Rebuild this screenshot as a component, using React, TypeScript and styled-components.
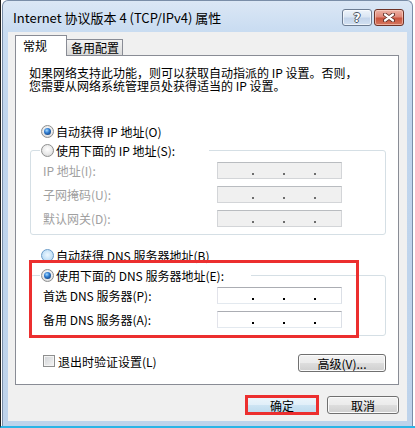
import React from 'react';
import styled, { createGlobalStyle, css } from 'styled-components';

const Global = createGlobalStyle`
  html, body { margin: 0; padding: 0; background: #ffffff; }
  body {
    width: 415px; height: 428px; overflow: hidden;
    font-family: "Noto Sans CJK SC", "Noto Sans", sans-serif;
    font-size: 12px; color: #000;
  }
  * { box-sizing: border-box; }
`;

const Desktop = styled.div`
  width: 415px;
  height: 428px;
  display: flex;
  align-items: flex-start;
  padding-left: 1px;
  border-left: 1px solid #1e1e1e;
  border-bottom: 2px solid #2cb4e6;
  background: #ffffff;
`;

const Window = styled.div`
  width: 411px;
  height: 426px;
  display: flex;
  flex-direction: column;
  padding: 0 5px 5px 5px;
  border: 1px solid #7a8ea8;
  border-bottom: none;
  border-radius: 6px 6px 0 0;
  background: linear-gradient(180deg, #dbe7f5 0px, #c9dcf1 30px, #c0d5ed 120px, #bed3eb 100%);
`;

const TitleBar = styled.div`
  height: 31px;
  flex: none;
  display: flex;
  justify-content: space-between;
  align-items: flex-start;
  padding: 0 3px 0 5px;
`;

const TitleText = styled.div`
  margin-top: 7px;
  font-size: 13px;
  line-height: 20px;
  color: #000;
  white-space: nowrap;
`;

const CaptionButtons = styled.div`
  display: flex;
  gap: 2px;
  margin-top: 8px;
`;

const CaptionButton = styled.div<{ $close?: boolean }>`
  width: 30px;
  height: 17px;
  border-radius: 3px;
  display: flex;
  align-items: center;
  justify-content: center;
  ${p => p.$close ? css`
    border: 1px solid #6e3328;
    background: linear-gradient(180deg, #edb3a6 0%, #e0897a 45%, #c9533d 55%, #d4775f 100%);
    box-shadow: inset 0 0 0 1px rgba(255, 220, 210, 0.55);
  ` : css`
    border: 1px solid #6c7c92;
    background: linear-gradient(180deg, #eef4fb 0%, #dbe6f3 45%, #c3d4ea 55%, #d3e1f2 100%);
    box-shadow: inset 0 0 0 1px rgba(255, 255, 255, 0.6);
  `}
`;

const HelpGlyph = styled.span`
  font-family: "DejaVu Sans", sans-serif;
  font-weight: bold;
  font-size: 12px;
  line-height: 12px;
  color: #ffffff;
  text-shadow: 1px 0 0 #4a5564, -1px 0 0 #4a5564, 0 1px 0 #4a5564, 0 -1px 0 #4a5564;
`;

const Client = styled.div`
  flex: 1;
  display: flex;
  flex-direction: column;
  background: #f0f0f0;
  padding-top: 3px;
`;

const TabStrip = styled.div`
  display: flex;
  align-items: flex-end;
  margin-left: 7px;
  height: 20px;
  position: relative;
  z-index: 1;
`;

const Tab = styled.div<{ $active?: boolean }>`
  display: flex;
  align-items: center;
  font-size: 12px;
  white-space: nowrap;
  border: 1px solid #898c95;
  ${p => p.$active ? css`
    height: 21px;
    margin-bottom: -1px;
    width: 52px;
    padding: 0 0 2px 7px;
    border-bottom: none;
    background: #ffffff;
  ` : css`
    height: 16px;
    width: 56px;
    padding: 0 0 0 4px;
    border-left: none;
    border-bottom: none;
    background: linear-gradient(180deg, #f3f3f3 0%, #e6e6e6 50%, #dadada 100%);
  `}
`;

const Panel = styled.div`
  height: 330px;
  margin: 0 8px 0 7px;
  border: 1px solid #898c95;
  background: #ffffff;
  padding: 0 12px 0 14px;
  display: flex;
  flex-direction: column;
`;

const Intro = styled.p`
  margin: 10px 0 0 -1px;
  font-size: 12px;
  line-height: 13px;
  white-space: nowrap;
`;

const RadioRow = styled.label<{ $gap?: number }>`
  display: flex;
  align-items: center;
  gap: 2px;
  height: 16px;
  margin-left: 11px;
  margin-top: ${p => p.$gap ?? 0}px;
  white-space: nowrap;
  font-size: 12px;
`;

const Radio = styled.span<{ $checked?: boolean; $hot?: boolean }>`
  position: relative;
  flex: none;
  width: 13px;
  height: 13px;
  border-radius: 50%;
  border: 1px solid ${p => (p.$hot ? '#6a9cc9' : '#8e8f8f')};
  background: ${p => p.$hot
    ? 'radial-gradient(circle at 50% 45%, #eef8ff 0, #c7e3f8 55%, #a4cdee 100%)'
    : 'radial-gradient(circle at 50% 40%, #ffffff 0, #e9e9e9 55%, #cfcfcf 100%)'};
  &::after {
    content: '';
    display: ${p => (p.$checked ? 'block' : 'none')};
    position: absolute;
    left: 2px;
    top: 2px;
    width: 7px;
    height: 7px;
    border-radius: 50%;
    background: radial-gradient(circle at 40% 35%, #a6dcff 0, #2f7bd0 40%, #0b2d5c 100%);
  }
`;

const GroupBox = styled.fieldset<{ $gap: number }>`
  margin: ${p => p.$gap}px 0 0 0;
  padding: 4px 12px 7px 12px;
  border: 1px solid #d5dfe5;
  border-radius: 3px;
  min-inline-size: 0;
`;

const GroupLegend = styled.legend<{ $width: number }>`
  padding: 0 0 0 1px;
  margin-left: -3px;
  width: ${p => p.$width}px;
  height: 16px;
  display: flex;
  align-items: center;
  gap: 2px;
  white-space: nowrap;
  font-size: 12px;
`;

const FieldGrid = styled.div`
  display: grid;
  grid-template-columns: 174px 125px;
  row-gap: 7px;
  align-items: center;
`;

const FieldLabel = styled.span<{ $disabled?: boolean }>`
  font-size: 12px;
  line-height: 17px;
  white-space: nowrap;
  color: ${p => (p.$disabled ? '#a0a0a0' : '#000000')};
`;

const IpBox = styled.div<{ $disabled?: boolean }>`
  height: 17px;
  width: 125px;
  display: flex;
  align-items: flex-end;
  gap: 29px;
  padding: 0 0 3px 34px;
  border: 1px solid;
  border-color: ${p => (p.$disabled
    ? '#b9bcc0 #d3d5d8 #d3d5d8 #d3d5d8'
    : '#abadb3 #dbdfe6 #e3e9ef #e2e3ea')};
  background: ${p => (p.$disabled ? '#f0f0f0' : '#ffffff')};
  color: ${p => (p.$disabled ? '#6d6d6d' : '#000000')};
`;

const IpDot = styled.span`
  width: 2px;
  height: 2px;
  background: currentColor;
`;

const MarkWrap = styled.div`
  position: relative;
`;

const Mark = styled.div`
  position: absolute;
  border: 3px solid #ec2f2f;
  pointer-events: none;
`;

const DnsMark = styled(Mark)`
  left: -1px;
  top: -3px;
  width: 330px;
  bottom: -2px;
`;

const OkMark = styled(Mark)`
  left: -1px;
  top: -1px;
  right: -1px;
  bottom: -1px;
`;

const BottomRow = styled.div`
  display: flex;
  justify-content: space-between;
  align-items: flex-start;
  margin-top: 17px;
`;

const CheckRow = styled.label`
  display: flex;
  align-items: center;
  gap: 3px;
  height: 16px;
  margin-left: 13px;
  white-space: nowrap;
  font-size: 12px;
`;

const CheckBox = styled.span`
  flex: none;
  width: 12px;
  height: 12px;
  border: 1px solid #8e8f8f;
  background: linear-gradient(135deg, #cfd2d6 0%, #e6e7e8 60%, #f5f5f5 100%);
  box-shadow: inset 0 0 0 1px #f4f4f4;
`;

const PushButton = styled.div<{ $width: number; $primary?: boolean; $gap?: number }>`
  width: ${p => p.$width}px;
  height: 18px;
  margin-top: ${p => p.$gap ?? 0}px;
  display: flex;
  align-items: center;
  justify-content: center;
  font-size: 12px;
  white-space: nowrap;
  border-radius: 3px;
  border: 1px solid ${p => (p.$primary ? '#5a8fb8' : '#707070')};
  box-shadow: inset 0 0 0 1px ${p => (p.$primary ? '#d6ecf8' : '#fbfbfb')};
  background: ${p => (p.$primary
    ? 'linear-gradient(180deg, #edf6fc 0%, #e1eff9 48%, #cde4f3 52%, #bcdaee 100%)'
    : 'linear-gradient(180deg, #f2f2f2 0%, #ebebeb 48%, #dddddd 52%, #cfcfcf 100%)')};
`;

const Footer = styled.div`
  display: flex;
  justify-content: flex-end;
  gap: 9px;
  margin-top: 11px;
  padding-right: 8px;
`;

const CloseIcon = () => (
  <svg width="12" height="9" viewBox="0 0 12 9">
    <path d="M2 1.5 L10 7.5 M10 1.5 L2 7.5" stroke="#5a2a22" strokeWidth="4" strokeLinecap="round" />
    <path d="M2 1.5 L10 7.5 M10 1.5 L2 7.5" stroke="#ffffff" strokeWidth="2.2" strokeLinecap="round" />
  </svg>
);

const Ip = ({ disabled }: { disabled?: boolean }) => (
  <IpBox $disabled={disabled}>
    <IpDot />
    <IpDot />
    <IpDot />
  </IpBox>
);

export default function App() {
  return (
    <>
      <Global />
      <Desktop>
        <Window>
          <TitleBar>
            <TitleText>Internet 协议版本 4 (TCP/IPv4) 属性</TitleText>
            <CaptionButtons>
              <CaptionButton><HelpGlyph>?</HelpGlyph></CaptionButton>
              <CaptionButton $close><CloseIcon /></CaptionButton>
            </CaptionButtons>
          </TitleBar>
          <Client>
            <TabStrip>
              <Tab $active>常规</Tab>
              <Tab>备用配置</Tab>
            </TabStrip>
            <Panel>
              <Intro>
                如果网络支持此功能，则可以获取自动指派的 IP 设置。否则，
                <br />
                您需要从网络系统管理员处获得适当的 IP 设置。
              </Intro>

              <RadioRow $gap={31}>
                <Radio $checked />
                自动获得 IP 地址(O)
              </RadioRow>

              <GroupBox $gap={3}>
                <GroupLegend $width={169}>
                  <Radio />
                  使用下面的 IP 地址(S):
                </GroupLegend>
                <FieldGrid>
                  <FieldLabel $disabled>IP 地址(I):</FieldLabel>
                  <Ip disabled />
                  <FieldLabel $disabled>子网掩码(U):</FieldLabel>
                  <Ip disabled />
                  <FieldLabel $disabled>默认网关(D):</FieldLabel>
                  <Ip disabled />
                </FieldGrid>
              </GroupBox>

              <RadioRow $gap={12}>
                <Radio $hot />
                自动获得 DNS 服务器地址(B)
              </RadioRow>

              <MarkWrap>
                <GroupBox $gap={4}>
                  <GroupLegend $width={211}>
                    <Radio $checked />
                    使用下面的 DNS 服务器地址(E):
                  </GroupLegend>
                  <FieldGrid>
                    <FieldLabel>首选 DNS 服务器(P):</FieldLabel>
                    <Ip />
                    <FieldLabel>备用 DNS 服务器(A):</FieldLabel>
                    <Ip />
                  </FieldGrid>
                </GroupBox>
                <DnsMark />
              </MarkWrap>

              <BottomRow>
                <CheckRow>
                  <CheckBox />
                  退出时验证设置(L)
                </CheckRow>
                <PushButton $width={88} $gap={1}>高级(V)...</PushButton>
              </BottomRow>
            </Panel>
            <Footer>
              <MarkWrap>
                <PushButton $width={72} $primary>确定</PushButton>
                <OkMark />
              </MarkWrap>
              <PushButton $width={72}>取消</PushButton>
            </Footer>
          </Client>
        </Window>
      </Desktop>
    </>
  );
}
